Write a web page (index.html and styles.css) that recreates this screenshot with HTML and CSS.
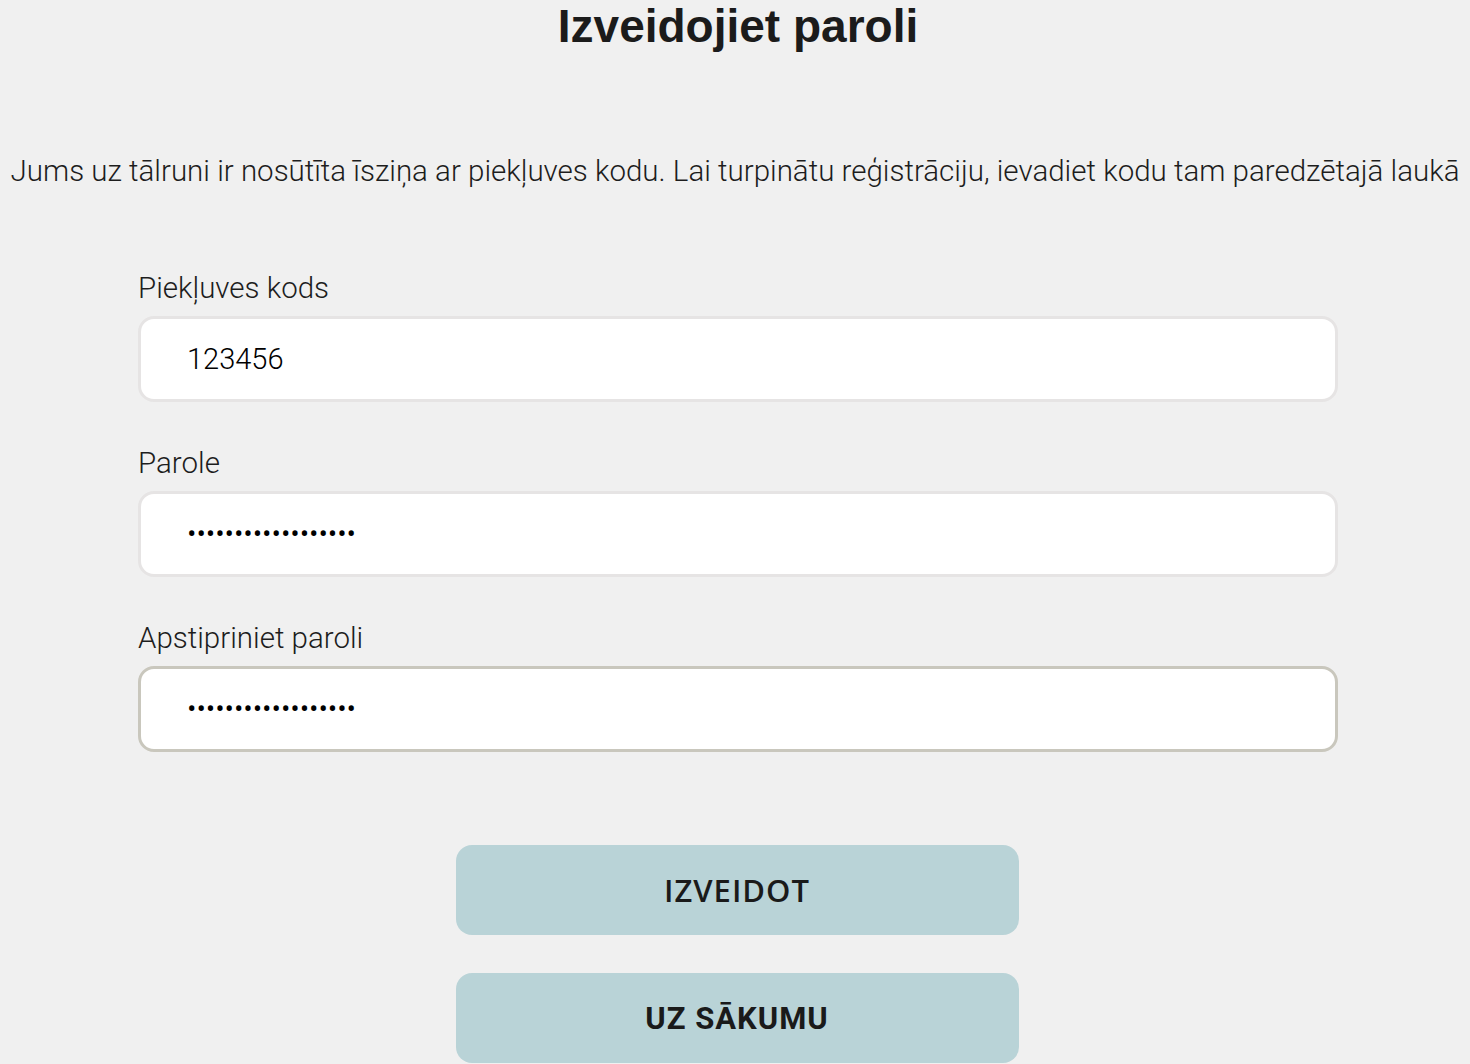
FILE: index.html
```html
<!DOCTYPE html>
<html lang="lv">
<head>
    <meta charset="UTF-8">
    <meta name="viewport" content="width=device-width, initial-scale=1.0">
    <title>Izveidojiet paroli</title>
    <link rel="stylesheet" href="styles.css">
</head>
<body>
    <main class="register">
        <h1 class="register-title">Izveidojiet paroli</h1>

        <p class="register-info">
            Jums uz tālruni ir nosūtīta īsziņa ar piekļuves kodu. Lai turpinātu reģistrāciju, ievadiet kodu tam paredzētajā laukā
        </p>

        <form class="register-form" onsubmit="return false;">
            <div class="fields">
                <div class="field">
                    <label class="field-label" for="code">Piekļuves kods</label>
                    <input class="field-input" id="code" type="text" value="123456">
                </div>

                <div class="field">
                    <label class="field-label" for="password">Parole</label>
                    <input class="field-input" id="password" type="password" value="paroleparoleparole">
                </div>

                <div class="field">
                    <label class="field-label" for="confirm">Apstipriniet paroli</label>
                    <input class="field-input active" id="confirm" type="password" value="paroleparoleparole">
                </div>
            </div>

            <div class="actions">
                <button class="action-btn primary" type="submit">IZVEIDOT</button>
                <button class="action-btn" type="button">UZ SĀKUMU</button>
            </div>
        </form>
    </main>
</body>
</html>
```

FILE: styles.css
```css
* {
    margin: 0;
    padding: 0;
    box-sizing: border-box;
}

body {
    font-family: Roboto, "Liberation Sans", sans-serif;
    font-weight: 300;
    background: #f0f0f0;
    color: #1d1d1d;
}

.register {
    display: flex;
    flex-direction: column;
    align-items: center;
}

.register-title {
    margin-left: 6px;
    font-family: "Liberation Sans", Arial, sans-serif;
    font-size: 46px;
    font-weight: 700;
    line-height: 52px;
    color: #1b1b1b;
}

.register-info {
    margin-top: 101px;
    font-size: 29.5px;
    line-height: 36px;
    text-align: center;
    white-space: nowrap;
}

.register-form {
    width: 1200px;
    margin-top: 81px;
    margin-left: 6px;
}

.fields {
    display: flex;
    flex-direction: column;
    gap: 43px;
}

.field {
    display: flex;
    flex-direction: column;
}

.field-label {
    font-size: 29.5px;
    line-height: 36px;
    margin-bottom: 10px;
}

.field-input {
    height: 86px;
    width: 100%;
    padding: 0 46px;
    background: #fff;
    border: 3px solid #e6e4e4;
    border-radius: 16px;
    font-family: Roboto, "Liberation Sans", sans-serif;
    font-weight: 300;
    font-size: 29px;
    color: #000;
    outline: none;
}

.field-input.active {
    border-color: #c9c7bd;
}

.actions {
    display: flex;
    flex-direction: column;
    align-items: center;
    gap: 38px;
    margin-top: 93px;
}

.action-btn {
    width: 563px;
    height: 90px;
    margin-left: -2px;
    border: none;
    border-radius: 16px;
    background: #b9d3d7;
    color: #1a1a1a;
    font-family: Roboto, "Liberation Sans", sans-serif;
    font-size: 31px;
    font-weight: 700;
    letter-spacing: 1px;
    cursor: pointer;
}

.action-btn.primary {
    font-family: "Open Sans", sans-serif;
    font-weight: 600;
}
```
